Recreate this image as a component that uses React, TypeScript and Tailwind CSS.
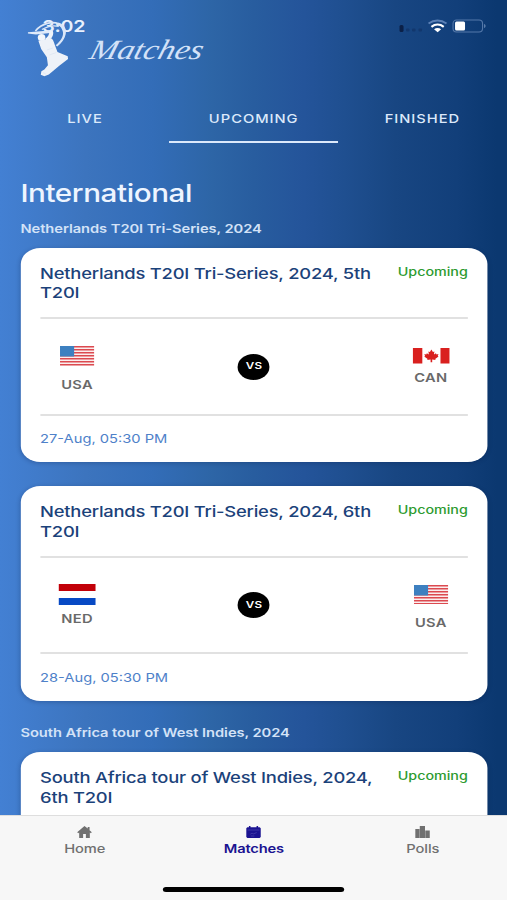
import type { ReactNode } from 'react';

type TeamCode = 'USA' | 'CAN' | 'NED';

type Match = {
  id: string;
  title: string;
  home?: TeamCode;
  away?: TeamCode;
  time?: string;
};

type Series = {
  name: string;
  matches: Match[];
};

const SERIES: Series[] = [
  {
    name: 'Netherlands T20I Tri-Series, 2024',
    matches: [
      { id: 'm5', title: 'Netherlands T20I Tri-Series, 2024, 5th T20I', home: 'USA', away: 'CAN', time: '27-Aug, 05:30 PM' },
      { id: 'm6', title: 'Netherlands T20I Tri-Series, 2024, 6th T20I', home: 'NED', away: 'USA', time: '28-Aug, 05:30 PM' },
    ],
  },
  {
    name: 'South Africa tour of West Indies, 2024',
    matches: [{ id: 'w6', title: 'South Africa tour of West Indies, 2024, 6th T20I' }],
  },
];

// The layout is 414 units wide and widened to fill the 507px viewport.
export default function App() {
  return (
    <div className="h-[900px] w-[507px] overflow-hidden bg-[#0a346d]">
      <div className="relative flex h-[900px] w-[414px] origin-top-left scale-x-[1.2247] flex-col overflow-hidden bg-[linear-gradient(90deg,#4380d3_0%,#3c74be_17%,#336db8_30%,#2d65a6_42%,#285d9f_50%,#24549a_60%,#1f4f90_68%,#184682_78%,#123f7a_90%,#0b3870_98%)] font-['Inter','Liberation_Sans',sans-serif]">
        <Header />
        <Tabs />
        <main className="min-h-0 flex-1 overflow-hidden pr-[16px] pl-[16.700px]">
          <h1 className="mt-[34.800px] text-[24.200px] leading-8 font-medium tracking-[-0.35px] text-[#eef5ff]">International</h1>
          {SERIES.map((series) => (
            <section key={series.name}>
              <h2 className="mt-2.5 text-[12px] leading-[18px] font-semibold tracking-[-0.050px] whitespace-nowrap text-[#d3e2f7]">{series.name}</h2>
              <div className="mt-[10px] flex flex-col gap-6 pb-[13.500px]">
                {series.matches.map((match) => (
                  <MatchCard key={match.id} match={match} />
                ))}
              </div>
            </section>
          ))}
        </main>
        <BottomNav />
      </div>
    </div>
  );
}

function Header() {
  return (
    <header className="relative h-[94px] shrink-0">
      <span className="absolute top-[17px] left-[34.500px] text-[16px] leading-[18px] font-semibold tracking-[-0.200px] text-[#e9f1fd]">3:02</span>
      <BatsmanLogo />
      <span className="absolute top-[31.500px] left-[73.800px] origin-left scale-x-[0.97] -skew-x-[14deg] font-['Liberation_Serif',serif] text-[28px] leading-9 text-[#d3e2f8] italic">
        Matches
      </span>
      <StatusIcons />
    </header>
  );
}

function BatsmanLogo() {
  return (
    <svg className="absolute top-[20px] left-[22px] h-[58px] w-[39px]" viewBox="0 0 48 58" preserveAspectRatio="none" fill="none">
      <path d="M1 12.200 26 10.300v2.400L9 14.600 1 13.600z" fill="#dfeafa" />
      <path d="M8.500 11C15 3 26 1 32 4" stroke="#dbe7f8" strokeWidth="1.600" />
      <path d="M15 9.500c6-3.500 12-4.500 17-3" stroke="#dbe7f8" strokeWidth="1.300" />
      <path d="M31 2.500c6 1 9 6 8 11.500-1 5-4 9-8.500 12.500l-1.700-1.300C34 21 36.300 17 36.300 13 36 9 34 6 30 4.500z" fill="#dbe7f8" />
      <path d="M22.500 11.500c4-2 4.500 1 3.500 4-1 2.500-2.500 4-5.500 5.500l-2.500-2c3-1.500 4.500-4.500 4.500-7.500z" fill="#eef3fa" />
      <ellipse cx="14.700" cy="17.600" rx="3.800" ry="3.500" fill="#f2f6fb" />
      <path d="M11.500 20.800C16 20.500 20 18.500 25 18.500c2.200 2.500 2.600 6 3.900 8.800l1.800 4.600 10.300 4.400.3 2.700-8.800 6.800L22 54.500l-4.500 1.800-3.600-1.600.6-3.500 3-1.700 3.600-4.300-1.100-8-5.700-8.300z" fill="#eef2f8" />
      <path d="m20 30 6-2m-3.500 7 7-2.500M16 52.500l3 1.500" stroke="#d3dfef" strokeWidth=".5" />
    </svg>
  );
}

function StatusIcons() {
  return (
    <svg className="absolute top-[18px] left-[325px] h-4 w-[73.500px]" viewBox="0 0 90 16" preserveAspectRatio="none" fill="none">
      <rect x="1.500" y="7" width="4" height="7" rx="1.500" fill="#0b2047" />
      <g fill="#12376d">
        <rect x="8" y="10.500" width="3.500" height="3" rx="1" />
        <rect x="14" y="10.500" width="3.500" height="3" rx="1" />
        <rect x="20.500" y="10.500" width="3.500" height="3" rx="1" />
      </g>
      <path d="M30.500 5.500c5.500-4 12.500-4 18 0" stroke="#5b80b6" strokeWidth="1.800" />
      <path d="M33.400 8.800c3.700-2.800 8.600-2.800 12.300 0" stroke="#fff" strokeWidth="2.200" />
      <path d="M36 11.300c2.100-1.600 5-1.600 7.100 0l-3.500 2.900z" fill="#fff" />
      <rect x="55" y="2" width="29.500" height="12" rx="3.500" stroke="#5478a9" strokeWidth="1.100" />
      <rect x="57" y="3.600" width="10" height="8.800" rx="1.500" fill="#fff" />
      <path d="M86 6c2 .5 2 3.500 0 4z" fill="#5f80ae" />
    </svg>
  );
}

function Tabs() {
  const tabs = ['LIVE', 'UPCOMING', 'FINISHED'];
  return (
    <nav className="ml-[0.600px] grid h-[49px] w-[413.200px] shrink-0 grid-cols-3">
      {tabs.map((tab) => (
        <div
          key={tab}
          className={`flex items-start justify-center border-b-[2px] pt-[15px] text-[12px] leading-[19px] font-medium tracking-[0.8px] text-[#dce9fa] ${
            tab === 'UPCOMING' ? 'border-[#dce9fb]' : 'border-transparent'
          }`}
        >
          {tab}
        </div>
      ))}
    </nav>
  );
}

function MatchCard({ match }: { match: Match }) {
  const { title, home, away, time } = match;
  return (
    <article className="flex h-[214.500px] flex-col rounded-[16px] bg-white px-4 shadow-[0_1px_4px_rgba(0,20,60,0.25)]">
      <div className="flex h-[71.500px] shrink-0 items-start justify-between border-b-2 border-[#e1e1e1] pt-4">
        <h3 className="w-[276px] text-[15px] leading-[19.300px] font-medium tracking-[-0.180px] text-[#1b427a]">{title}</h3>
        <span className="text-[11.700px] leading-4 font-medium text-[#2d9b30]">Upcoming</span>
      </div>
      {home && away && (
        <div className="flex h-[96.500px] shrink-0 items-center justify-between border-b-2 border-[#e1e1e1] px-[15px]">
          <Team code={home} />
          <span className="flex size-[26px] items-center justify-center rounded-full bg-black text-[9.500px] font-semibold tracking-[0.200px] text-white">VS</span>
          <Team code={away} />
        </div>
      )}
      {time && <time className="pt-[14.500px] text-[12px] leading-[18px] text-[#4e81c9]">{time}</time>}
    </article>
  );
}

function Team({ code }: { code: TeamCode }) {
  return (
    <div className="flex w-[30.500px] flex-col items-center">
      <Flag code={code} />
      <span className="text-[12px] leading-[16px] font-semibold tracking-[0.200px] text-[#696969]">{code}</span>
    </div>
  );
}

function Flag({ code }: { code: TeamCode }) {
  if (code === 'USA') {
    return (
      <svg className="mt-[6px] mb-[11px] h-[19.500px] w-7" viewBox="0 0 34 19.500" preserveAspectRatio="none">
        <rect width="34" height="19.500" fill="#fbeeee" />
        {[0, 1, 2, 3, 4, 5, 6].map((i) => (
          <rect key={i} y={i * 3} width="34" height="1.500" fill="#dc4a50" />
        ))}
        <rect width="14" height="10.500" fill="#3d80c0" />
      </svg>
    );
  }
  if (code === 'CAN') {
    return (
      <svg className="mt-[1px] mb-[6.500px] h-[15.500px] w-[30.500px]" viewBox="0 0 37 15.500" preserveAspectRatio="none" fill="#d9201f">
        <rect width="9.500" height="15.500" />
        <rect x="27.500" width="9.500" height="15.500" />
        <path d="m18.500 1.500 1.500 2.600 1.500-.7-.5 3.200 2-1.400.6 1.200 1.900-.3-.7 1.900.8.500-3.400 2.400.5 1.100-3.400-.4v2.700h-1.600v-2.700l-3.400.4.500-1.100-3.400-2.400.8-.5-.7-1.900 1.900.3.600-1.200 2 1.400-.5-3.200 1.500.7z" />
      </svg>
    );
  }
  return (
    <div className="mt-[1px] mb-[6.500px] flex h-[20.500px] w-[30.500px] flex-col justify-between">
      <div className="h-[7px] bg-[#c20008]" />
      <div className="h-[7px] bg-[#0749c4]" />
    </div>
  );
}

function BottomNav() {
  return (
    <footer className="flex h-[85px] shrink-0 flex-col items-center border-t border-[#dedede] bg-[#f7f7f7]">
      <div className="ml-[0.500px] grid w-full grid-cols-3">
        <NavItem label="Home" color="text-[#707070]">
          <path d="M8 0 0 6.200l1 1.100 1.200-.9V12h4.300V8h3v4h4.300V6.400l1.200.9 1-1.100-2.500-2V1h-2v1.600z" />
        </NavItem>
        <NavItem label="Matches" color="text-[#1b1391]" active>
          <path d="M3 0h1.700v1.200h6.600V0H13v1.200h1.700l1.300 1v8.800l-1.300 1H1.300L0 11V2.200l1.300-1H3z" />
          <path d="M1.500 4h13M4.500 8.200l2-1 1 .8 4-1.400M5 10h4" stroke="#5550b5" strokeWidth=".6" fill="none" />
        </NavItem>
        <NavItem label="Polls" color="text-[#707070]">
          <path d="M0 3h4.700v9H0zM5 0h5.700v12H5zM11 4.500H16V12h-5z" />
        </NavItem>
      </div>
      <div className="mt-[30px] h-[5px] w-[148px] rounded-full bg-black" />
    </footer>
  );
}

function NavItem({ label, color, active, children }: { label: string; color: string; active?: boolean; children: ReactNode }) {
  return (
    <div className={`flex flex-col items-center pt-[10px] ${color}`}>
      <svg className="h-3 w-3" viewBox="0 0 16 12" preserveAspectRatio="none" fill="currentColor">
        {children}
      </svg>
      <span className={`mt-[3px] text-[12px] leading-4 ${active ? 'font-semibold tracking-[-0.150px]' : 'font-medium tracking-[-0.050px]'}`}>{label}</span>
    </div>
  );
}
